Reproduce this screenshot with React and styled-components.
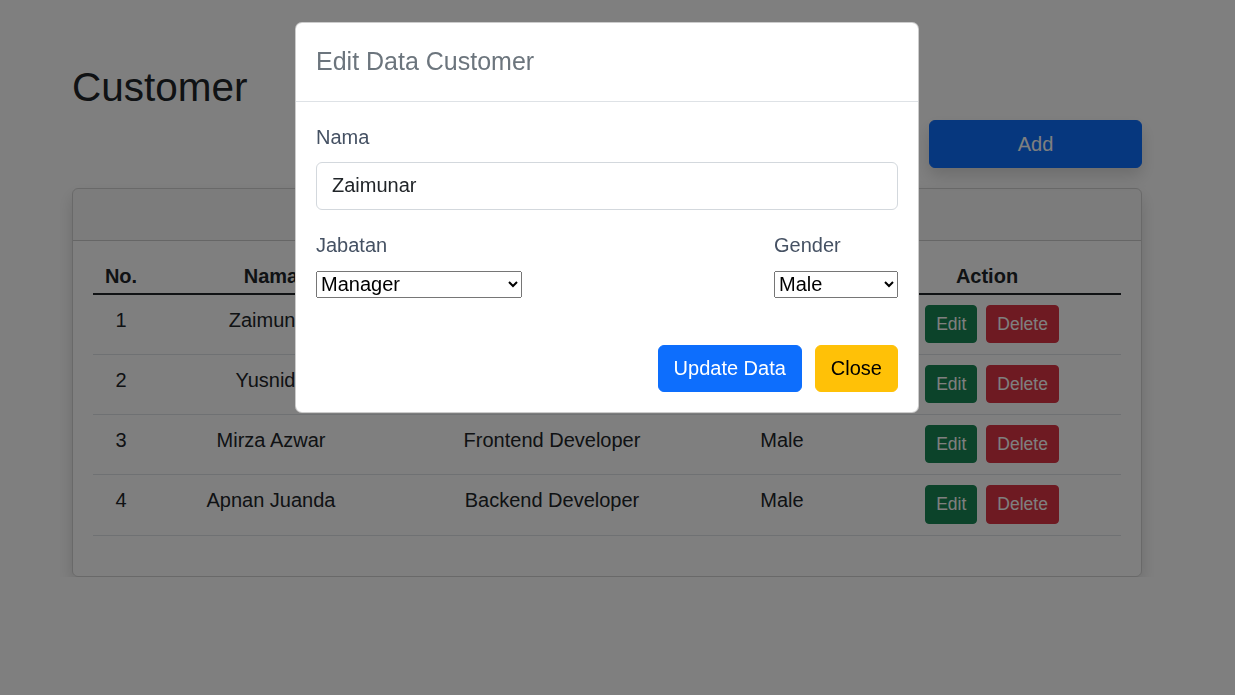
import styled, { createGlobalStyle } from 'styled-components';

const GlobalStyle = createGlobalStyle`
  * {
    box-sizing: border-box;
  }
  body {
    margin: 0;
    background: #fff;
    color: #212529;
    font-family: "Liberation Sans", Arial, sans-serif;
    font-size: 20px;
    line-height: 1.5;
  }
`;

const customers = [
  { id: 1, name: 'Zaimunar', jabatan: 'Manager', gender: 'Male' },
  { id: 2, name: 'Yusnida', jabatan: 'Supervisor', gender: 'Female' },
  { id: 3, name: 'Mirza Azwar', jabatan: 'Frontend Developer', gender: 'Male' },
  { id: 4, name: 'Apnan Juanda', jabatan: 'Backend Developer', gender: 'Male' }
];

const columns = [
  { key: 'no', label: 'No.', width: 56 },
  { key: 'name', label: 'Nama', width: 244 },
  { key: 'jabatan', label: 'Jabatan', width: 318 },
  { key: 'gender', label: 'Gender', width: 142 },
  { key: 'action', label: 'Action', width: 268 }
];

const Container = styled.div`
  width: 1070px;
  margin-left: 72px;
  padding-top: 63px;
`;

const Title = styled.h1`
  margin: 0;
  font-size: 40.5px;
  font-weight: 500;
  line-height: 1.2;
`;

const Toolbar = styled.div`
  display: flex;
  justify-content: flex-end;
  margin-top: 8px;
`;

const Button = styled.button`
  font-family: inherit;
  font-size: ${({ $size }) => ($size === 'sm' ? '17.5px' : '20px')};
  line-height: 1.5;
  padding: ${({ $size }) => ($size === 'sm' ? '5px 10px' : '7.5px 15px')};
  border: 1px solid ${({ $bg }) => $bg};
  background: ${({ $bg }) => $bg};
  color: ${({ $fg }) => $fg || '#fff'};
  border-radius: ${({ $size }) => ($size === 'sm' ? '4px' : '6px')};
  cursor: pointer;
`;

const AddButton = styled(Button)`
  width: 213px;
  padding: 8px 15px;
  box-shadow: 0 8px 16px rgba(0, 0, 0, 0.15);
`;

const Card = styled.div`
  margin-top: 20px;
  border: 1px solid rgba(0, 0, 0, 0.175);
  border-radius: 6px;
  box-shadow: 0 8px 16px rgba(0, 0, 0, 0.15);
  overflow: hidden;
`;

const CardHeader = styled.div`
  height: 52px;
  background: rgba(33, 37, 41, 0.03);
  border-bottom: 1px solid rgba(0, 0, 0, 0.175);
`;

const CardBody = styled.div`
  padding: 20px;
`;

const Table = styled.table`
  width: 100%;
  border-collapse: collapse;
  margin-bottom: 20px;
  table-layout: fixed;
`;

const Th = styled.th`
  padding: 0 8px 2px;
  line-height: 30px;
  font-weight: 700;
  text-align: center;
  border-bottom: 2px solid #212529;
`;

const Td = styled.td`
  padding: 10px 8px 11px;
  line-height: 30px;
  text-align: center;
  vertical-align: top;
  border-bottom: 1px solid #dee2e6;
`;

const Actions = styled.div`
  display: flex;
  justify-content: center;
  gap: 9px;
  padding-left: 10px;
`;

const Backdrop = styled.div`
  position: fixed;
  inset: 0;
  background: rgba(0, 0, 0, 0.5);
`;

const Dialog = styled.div`
  width: 624px;
  margin: 22px 0 0 295px;
  background: #fff;
  border: 1px solid rgba(0, 0, 0, 0.2);
  border-radius: 7px;
`;

const DialogHeader = styled.div`
  padding: 20px;
  border-bottom: 1px solid #dee2e6;
`;

const DialogTitle = styled.h5`
  margin: 0;
  font-size: 25px;
  font-weight: 500;
  line-height: 1.5;
  color: #6c757d;
`;

const DialogBody = styled.div`
  padding: 20px 20px 27px;
`;

const Label = styled.label`
  display: block;
  margin-bottom: ${({ $gap }) => $gap || 10}px;
  color: #455163;
`;

const Input = styled.input`
  display: block;
  width: 100%;
  height: 48px;
  padding: 8px 15px;
  font-family: inherit;
  font-size: 20px;
  color: #212529;
  border: 1px solid #d3d8dd;
  border-radius: 6px;
  margin-bottom: 20px;
`;

const FieldRow = styled.div`
  display: flex;
  justify-content: space-between;
`;

const Select = styled.select`
  display: block;
  width: ${({ $width }) => $width}px;
  height: 27px;
  font-family: "Liberation Sans", Arial, sans-serif;
  font-size: 20px;
  color: #000;
`;

const DialogFooter = styled.div`
  display: flex;
  justify-content: flex-end;
  gap: 13px;
  padding: 20px;
`;

export default function App() {
  return (
    <>
      <GlobalStyle />
      <Container>
        <Title>Customer</Title>
        <Toolbar>
          <AddButton $bg="#0d6efd">Add</AddButton>
        </Toolbar>
        <Card>
          <CardHeader />
          <CardBody>
            <Table>
              <colgroup>
                {columns.map((c) => (
                  <col key={c.key} style={{ width: c.width }} />
                ))}
              </colgroup>
              <thead>
                <tr>
                  {columns.map((c) => (
                    <Th key={c.key}>{c.label}</Th>
                  ))}
                </tr>
              </thead>
              <tbody>
                {customers.map((c) => (
                  <tr key={c.id}>
                    <Td>{c.id}</Td>
                    <Td>{c.name}</Td>
                    <Td>{c.jabatan}</Td>
                    <Td>{c.gender}</Td>
                    <Td>
                      <Actions>
                        <Button $size="sm" $bg="#198754">Edit</Button>
                        <Button $size="sm" $bg="#dc3545">Delete</Button>
                      </Actions>
                    </Td>
                  </tr>
                ))}
              </tbody>
            </Table>
          </CardBody>
        </Card>
      </Container>

      <Backdrop>
        <Dialog>
          <DialogHeader>
            <DialogTitle>Edit Data Customer</DialogTitle>
          </DialogHeader>
          <DialogBody>
            <Label>Nama</Label>
            <Input defaultValue="Zaimunar" />
            <FieldRow>
              <div>
                <Label $gap={11}>Jabatan</Label>
                <Select $width={206} defaultValue="Manager">
                  <option>Manager</option>
                  <option>Supervisor</option>
                  <option>Frontend Developer</option>
                  <option>Backend Developer</option>
                </Select>
              </div>
              <div>
                <Label $gap={11}>Gender</Label>
                <Select $width={124} defaultValue="Male">
                  <option>Male</option>
                  <option>Female</option>
                </Select>
              </div>
            </FieldRow>
          </DialogBody>
          <DialogFooter>
            <Button $bg="#0d6efd">Update Data</Button>
            <Button $bg="#ffc107" $fg="#000">Close</Button>
          </DialogFooter>
        </Dialog>
      </Backdrop>
    </>
  );
}
